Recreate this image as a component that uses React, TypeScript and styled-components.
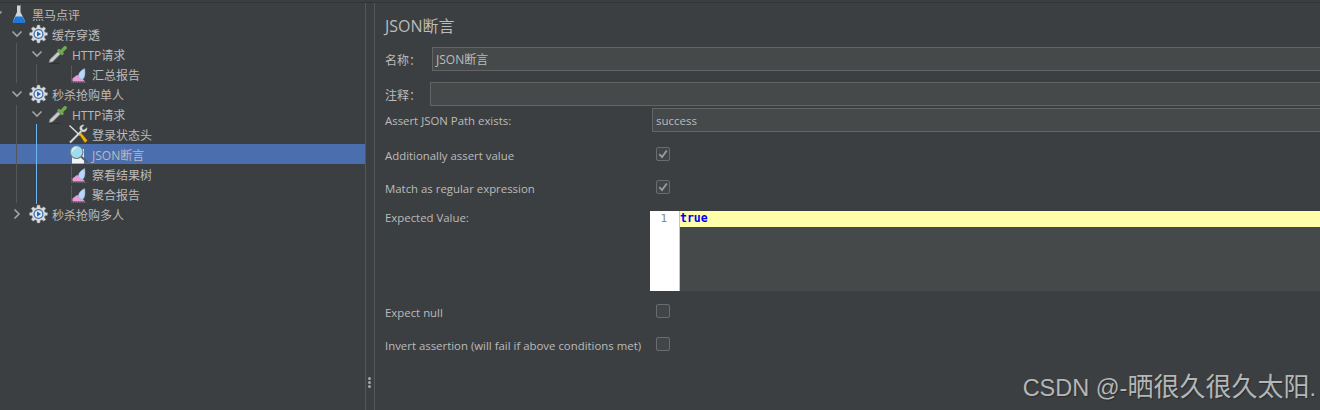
import React from "react";
import styled, { createGlobalStyle } from "styled-components";

const uiFont = `"Open Sans", "Noto Sans CJK SC", sans-serif`;

const GlobalStyle = createGlobalStyle`
  html, body {
    margin: 0;
    padding: 0;
    width: 1320px;
    height: 410px;
    overflow: hidden;
    background: #3c3f41;
  }
`;

const Frame = styled.div`
  position: relative;
  width: 1320px;
  height: 410px;
  padding-top: 3px;
  box-sizing: border-box;
  background: #3c3f41;
  color: #bbbbbb;
  font-family: ${uiFont};
  font-size: 11.4px;
  overflow: hidden;
  display: flex;
  flex-direction: column;
`;

const TopLine = styled.div`
  position: absolute;
  top: 2px;
  left: 0;
  right: 0;
  height: 1px;
  background: #323435;
`;

const Split = styled.div`
  flex: 1;
  display: flex;
  min-height: 0;
`;

const TreePane = styled.div`
  position: relative;
  width: 365px;
  flex: none;
  padding-top: 1px;
  box-sizing: border-box;
  overflow: hidden;
`;

const Guide = styled.div<{ $x: number; $top: number; $h: number; $blue?: boolean }>`
  position: absolute;
  left: ${(p) => p.$x}px;
  top: ${(p) => p.$top}px;
  height: ${(p) => p.$h}px;
  width: 1px;
  background: ${(p) => (p.$blue ? "#6fb5f2" : "#55585a")};
`;

const Row = styled.div<{ $depth: number; $selected?: boolean }>`
  height: 20px;
  display: flex;
  align-items: center;
  padding-left: ${(p) => p.$depth * 20}px;
  background: ${(p) => (p.$selected ? "#4b6eaf" : "transparent")};
`;

const Arrow = styled.span`
  width: 12px;
  height: 12px;
  margin-left: -9px;
  margin-right: 9px;
  display: flex;
  flex: none;
`;

const NodeIcon = styled.span`
  width: 20px;
  height: 20px;
  flex: none;
  margin-left: -4px;
  margin-right: 4px;
  display: flex;
`;

const NodeLabel = styled.span`
  white-space: nowrap;
  font-size: 12px;
  line-height: 20px;
  position: relative;
  top: 2px;
`;

const Divider = styled.div`
  width: 10px;
  flex: none;
  position: relative;
  box-sizing: border-box;
  border-left: 1px solid #55585a;
  border-right: 1px solid #55585a;
`;

const Grip = styled.div`
  position: absolute;
  left: 2px;
  top: 374px;
  display: flex;
  flex-direction: column;
  gap: 1px;
`;

const GripDot = styled.span`
  width: 3px;
  height: 3px;
  border-radius: 50%;
  background: #a4a6a8;
`;

const Panel = styled.div`
  flex: 1;
  min-width: 0;
  padding: 13px 0 0 10px;
  display: flex;
  flex-direction: column;
  overflow: hidden;
`;

const Title = styled.div`
  font-size: 16px;
  line-height: 20px;
  height: 21px;
  color: #bbbbbb;
`;

const NameRow = styled.div<{ $top: number }>`
  display: flex;
  align-items: center;
  height: 24px;
  margin-top: ${(p) => p.$top}px;
`;

const NameLabel = styled.label<{ $w: number }>`
  width: ${(p) => p.$w}px;
  flex: none;
  font-size: 12px;
  padding-top: 2px;
`;

const TextInput = styled.div<{ $size?: number }>`
  flex: 1;
  height: 24px;
  margin-right: -4px;
  box-sizing: border-box;
  border: 1px solid #646464;
  background: #45494a;
  padding: 0 3px;
  line-height: 24px;
  color: #bbbbbb;
  font-size: ${(p) => p.$size ?? 11.5}px;
  white-space: nowrap;
`;

const FieldRow = styled.div<{ $h: number; $top?: number }>`
  display: grid;
  grid-template-columns: 267px 1fr;
  align-items: center;
  height: ${(p) => p.$h}px;
  margin-top: ${(p) => p.$top ?? 0}px;
`;

const Check = styled.span`
  width: 14px;
  height: 14px;
  margin-left: 4px;
  margin-top: -3px;
  box-sizing: border-box;
  border: 1px solid #6b6b6b;
  border-radius: 2px;
  background: #414547;
  display: flex;
  align-items: center;
  justify-content: center;
`;

const ExpectedRow = styled.div`
  display: grid;
  grid-template-columns: 265px 1fr;
  height: 80px;
  margin-top: 6px;
`;

const ExpectedLabel = styled.span`
  line-height: 14px;
`;

const Editor = styled.div`
  display: flex;
  background: #45494a;
  min-width: 0;
`;

const Gutter = styled.div`
  width: 30px;
  flex: none;
  background: #ffffff;
  border-right: 1px solid #c4c4c4;
  color: #7d8c93;
  font-family: "DejaVu Sans Mono", monospace;
  font-size: 11px;
  line-height: 15px;
  text-align: right;
  padding-right: 12px;
  box-sizing: border-box;
`;

const Lines = styled.div`
  flex: 1;
`;

const ActiveLine = styled.div`
  height: 16px;
  background: #ffffaa;
  color: #0000ff;
  font-family: "DejaVu Sans Mono", monospace;
  font-size: 11.5px;
  font-weight: 700;
  line-height: 15px;
`;

const Watermark = styled.div`
  position: absolute;
  right: 4px;
  top: 374px;
  font-family: "Liberation Sans", "Noto Sans CJK SC", sans-serif;
  font-size: 23.5px;
  line-height: 26px;
  color: #b4b6b7;
  text-shadow: 1px 1px 1px #2a2c2d;
  white-space: nowrap;
`;

const WatermarkCjk = styled.span`
  font-size: 26px;
`;

const ChevronDown = () => (
  <svg width="12" height="12" viewBox="0 0 12 12" fill="none">
    <path d="M1.500 3.500l4.500 4.500 4.500-4.500" stroke="#a0a2a4" strokeWidth="1.700" />
  </svg>
);

const ChevronRight = () => (
  <svg width="12" height="12" viewBox="0 0 12 12" fill="none">
    <path d="M3.500 1.500L8 6l-4.500 4.500" stroke="#a0a2a4" strokeWidth="1.700" />
  </svg>
);

const Flask = () => (
  <svg width="20" height="20" viewBox="0 0 20 20">
    <path d="M9 1h3.500v7l4.500 9c.4 1-.2 2-1.200 2H6.200c-1 0-1.600-1-1.200-2l4-9z" fill="#cfd4d8" />
    <path d="M7.500 12.500h6.800l2.700 4.500c.4 1-.2 2-1.200 2H6.200c-1 0-1.600-1-1.200-2z" fill="#1f77d8" />
    <path d="M9 1.500h3.500" stroke="#82878b" strokeWidth="1" />
  </svg>
);

const Gear = () => (
  <svg width="20" height="20" viewBox="0 0 20 20">
    <g transform="translate(1.500 1) scale(.9)">
      <path
        d="M8.500 0h3l.5 2.800 1.700.7 2.300-1.600 2.100 2.100-1.600 2.300.7 1.700 2.800.5v3l-2.800.5-.7 1.700 1.600 2.300-2.100 2.100-2.300-1.600-1.700.7-.5 2.800h-3L8 17.200l-1.700-.7-2.300 1.600-2.100-2.100 1.600-2.300-.7-1.700L0 11.500v-3l2.800-.5.700-1.700-1.600-2.300L4 1.900l2.300 1.600L8 2.800z"
        fill="#d9dadb"
        stroke="#85878a"
        strokeWidth=".5"
      />
      <circle cx="10" cy="10" r="5.600" fill="#3e6fb0" />
      <circle cx="10" cy="10" r="4.200" fill="#dfe6ee" />
      <path d="M8.300 7.300l4.600 2.700-4.600 2.700z" fill="#2a5ea8" />
    </g>
  </svg>
);

const Dropper = () => (
  <svg width="20" height="20" viewBox="0 0 20 20">
    <ellipse cx="7" cy="19.400" rx="5.500" ry=".6" fill="#2e3031" />
    <path d="M1 18.500l.8-3L10 7.500l2.500 2.500-8 8z" fill="#c9ccce" stroke="#66696b" strokeWidth=".6" />
    <path d="M9 6.500l5 5 2-2-1-1.300 3.600-3.400c1.300-1.700-.8-3.600-2.500-2.500L12.500 6l-1.500-1.500z" fill="#6fa84f" />
  </svg>
);

const Report = () => (
  <svg width="20" height="20" viewBox="0 0 20 20">
    <path d="M3.500 2v16.500h15" fill="none" stroke="#66686a" strokeWidth="1" strokeDasharray="1.500 .7" />
    <path d="M4.500 17.500v-3l4.500-3.500 4 2 4 4.500z" fill="#ef9ad8" />
    <path d="M10.500 12.500c-.5-3 2.500-6.500 6.200-8 .5 3.500 .6 8-1.200 10-1.800 1.200-4.300 .4-5-2z" fill="#bcd7f5" stroke="#7ea6d6" strokeWidth=".5" />
  </svg>
);

const Tools = () => (
  <svg width="20" height="20" viewBox="0 0 20 20">
    <path d="M1.500 1.500L12 11.500" stroke="#e0e1e2" strokeWidth="1.300" />
    <path d="M11 10.500l2-2 6.500 8-2.500 2.500z" fill="#eeb211" stroke="#5e4907" strokeWidth=".5" />
    <path d="M2 18.500L13.500 7" stroke="#d7d8d9" strokeWidth="2" />
    <path d="M19 3.500l-2.800 2.300-1.800-.5-.4-1.800L16.300 1c-2.300-.8-4.600 .9-4.800 3-.1 2 2.200 4.300 4.400 4.100 2.200-.2 3.900-2.500 3.100-4.600z" fill="#dcdddf" stroke="#77797b" strokeWidth=".4" />
  </svg>
);

const Lens = () => (
  <svg width="20" height="20" viewBox="0 0 20 20">
    <path d="M4 5h12v14.500H4z" fill="#f2f3f6" />
    <path d="M13 12.500l6.500 6" stroke="#595c60" strokeWidth="2" />
    <circle cx="8.500" cy="8" r="6.500" fill="#9fdcf0" stroke="#6c7780" strokeWidth="1.200" />
    <path d="M4.500 7.500c.3-2.200 1.800-3.600 4-3.800" fill="none" stroke="#e8f8fc" strokeWidth="1.200" />
  </svg>
);

const Tick = () => (
  <svg width="10" height="10" viewBox="0 0 10 10" fill="none">
    <path d="M1.300 5.200L4 8l4.800-6.500" stroke="#9a9c9e" strokeWidth="1.800" />
  </svg>
);

type Node = {
  depth: number;
  label: string;
  icon: React.ReactNode;
  arrow?: React.ReactNode;
  selected?: boolean;
};

const nodes: Node[] = [
  { depth: 0, label: "黑马点评", icon: <Flask />, arrow: <ChevronDown /> },
  { depth: 1, label: "缓存穿透", icon: <Gear />, arrow: <ChevronDown /> },
  { depth: 2, label: "HTTP请求", icon: <Dropper />, arrow: <ChevronDown /> },
  { depth: 3, label: "汇总报告", icon: <Report /> },
  { depth: 1, label: "秒杀抢购单人", icon: <Gear />, arrow: <ChevronDown /> },
  { depth: 2, label: "HTTP请求", icon: <Dropper />, arrow: <ChevronDown /> },
  { depth: 3, label: "登录状态头", icon: <Tools /> },
  { depth: 3, label: "JSON断言", icon: <Lens />, selected: true },
  { depth: 3, label: "察看结果树", icon: <Report /> },
  { depth: 3, label: "聚合报告", icon: <Report /> },
  { depth: 1, label: "秒杀抢购多人", icon: <Gear />, arrow: <ChevronRight /> },
];

export default function App() {
  return (
    <Frame>
      <GlobalStyle />
      <TopLine />
      <Split>
        <TreePane>
          {nodes.map((n, i) => (
            <Row key={i} $depth={n.depth} $selected={n.selected}>
              <Arrow>{n.arrow}</Arrow>
              <NodeIcon>{n.icon}</NodeIcon>
              <NodeLabel>{n.label}</NodeLabel>
            </Row>
          ))}
          <Guide $x={16} $top={40} $h={40} />
          <Guide $x={16} $top={102} $h={98} />
          <Guide $x={36} $top={61} $h={20} />
          <Guide $x={36} $top={121} $h={80} $blue />
        </TreePane>
        <Divider>
          <Grip>
            <GripDot />
            <GripDot />
            <GripDot />
          </Grip>
        </Divider>
        <Panel>
          <Title>JSON断言</Title>
          <NameRow $top={10}>
            <NameLabel $w={47}>名称：</NameLabel>
            <TextInput $size={12}>JSON断言</TextInput>
          </NameRow>
          <NameRow $top={11}>
            <NameLabel $w={45}>注释：</NameLabel>
            <TextInput />
          </NameRow>
          <FieldRow $h={28}>
            <span>Assert JSON Path exists:</span>
            <TextInput>success</TextInput>
          </FieldRow>
          <FieldRow $h={33} $top={5}>
            <span>Additionally assert value</span>
            <Check>
              <Tick />
            </Check>
          </FieldRow>
          <FieldRow $h={33}>
            <span>Match as regular expression</span>
            <Check>
              <Tick />
            </Check>
          </FieldRow>
          <ExpectedRow>
            <ExpectedLabel>Expected Value:</ExpectedLabel>
            <Editor>
              <Gutter>1</Gutter>
              <Lines>
                <ActiveLine>true</ActiveLine>
              </Lines>
            </Editor>
          </ExpectedRow>
          <FieldRow $h={43}>
            <span>Expect null</span>
            <Check />
          </FieldRow>
          <FieldRow $h={23}>
            <span>Invert assertion (will fail if above conditions met)</span>
            <Check />
          </FieldRow>
        </Panel>
      </Split>
      <Watermark>
        CSDN @-<WatermarkCjk>晒很久很久太阳</WatermarkCjk>.
      </Watermark>
    </Frame>
  );
}
